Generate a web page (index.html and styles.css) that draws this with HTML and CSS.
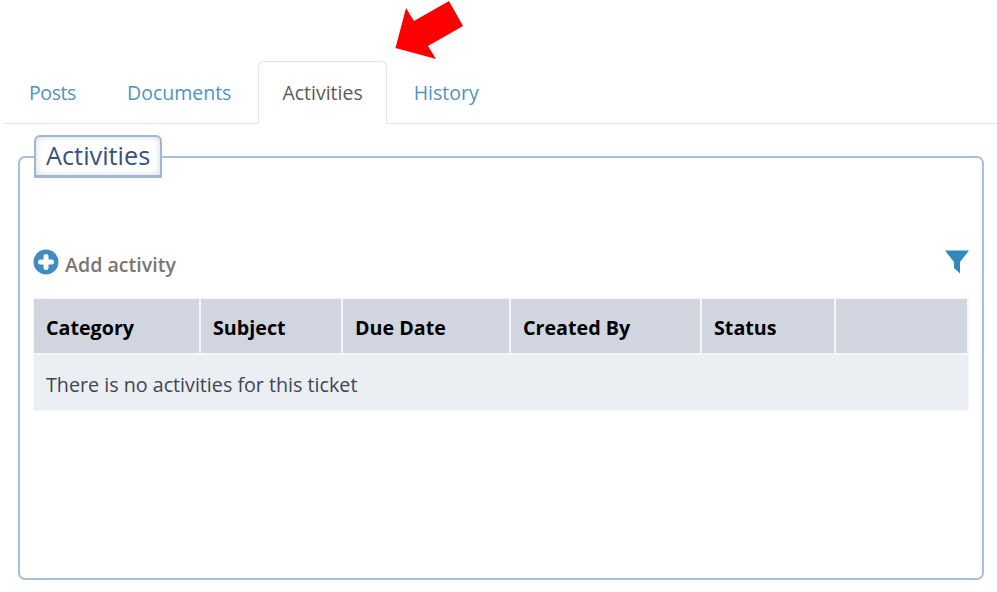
FILE: index.html
```html
<!DOCTYPE html>
<html lang="en">
<head>
<meta charset="utf-8">
<title>Activities</title>
<link rel="stylesheet" href="styles.css">
</head>
<body>
<svg class="arrow" width="80" height="64" viewBox="390 0 80 64"><polygon points="395.5,48 406,8 414,21 449,1 463,26 428,46 436,59" fill="#ff0000"/></svg>
<nav class="tabs">
  <a class="tab tab-tight">Posts</a>
  <a class="tab">Documents</a>
  <a class="tab active">Activities</a>
  <a class="tab">History</a>
</nav>
<fieldset class="panel">
  <legend class="panel-title">Activities</legend>
  <div class="toolbar">
    <a class="add">
      <svg class="add-icon" width="26" height="26" viewBox="0 0 26 26"><circle cx="13" cy="13" r="12.5" fill="#3d8dbf"/><path d="M13 7.500v11M7.500 13h11" stroke="#fff" stroke-width="5" stroke-linecap="round" fill="none"/></svg>
      <span>Add activity</span>
    </a>
    <svg class="filter" width="24" height="24" viewBox="0 0 24 24"><path d="M0 .5H24L15 12V23.500L9 18V12Z" fill="#3388bb"/></svg>
  </div>
  <div class="table">
    <div class="head">Category</div>
    <div class="head">Subject</div>
    <div class="head">Due Date</div>
    <div class="head">Created By</div>
    <div class="head">Status</div>
    <div class="head head-last"></div>
    <div class="empty">There is no activities for this ticket</div>
  </div>
</fieldset>
</body>
</html>
```
FILE: styles.css
```css
* { box-sizing: border-box; }
html, body { margin: 0; padding: 0; background: #fff; }
body {
  position: relative;
  width: 997px;
  height: 592px;
  overflow: hidden;
  font-family: "Open Sans", "Noto Sans", sans-serif;
  color: #3c4043;
  padding-top: 61px;
}
.arrow { position: absolute; left: 390px; top: 0; }
.tabs {
  display: flex;
  gap: 3px;
  height: 63px;
  margin-left: 4px;
  padding-left: 1px;
  border-bottom: 1px solid #e2e4e6;
}
.tab {
  height: 63px;
  padding: 18px 23px 0;
  border: 1px solid transparent;
  border-radius: 6px 6px 0 0;
  font-size: 19.500px;
  line-height: 26px;
  color: #4f93c3;
}
.tab-tight { letter-spacing: -0.4px; }
.tab.active {
  color: #5e5a58;
  background: #fff;
  border-color: #e2e4e6;
  border-bottom-color: #fff;
}
.panel {
  width: 966px;
  height: 445px;
  margin: 11px 0 0 18px;
  padding: 71px 14px 0;
  border: 2px solid #aabfdc;
  border-radius: 7px;
  min-width: 0;
}
.panel-title {
  display: block;
  width: 128px;
  height: 43px;
  padding: 0 0 0 10px;
  border: 2px solid #a5b5cd;
  border-bottom-width: 3px;
  border-radius: 6px 6px 1px 1px;
  background: #fff;
  box-shadow: inset 0 0 7px #cfd7e6;
  font-size: 25.300px;
  line-height: 36px;
  color: #36527e;
}
.toolbar {
  display: flex;
  justify-content: space-between;
  align-items: flex-start;
  height: 50px;
}
.add {
  display: flex;
  align-items: flex-start;
  gap: 6px;
  margin-left: -1px;
  font-size: 19.600px;
  font-weight: 600;
  line-height: 28px;
  color: #7a7672;
}
.add span { padding-top: 2px; }
.add-icon, .filter { display: block; }
.filter { margin-top: 1px; margin-right: -1px; }
.table {
  display: grid;
  grid-template-columns: 167px 142px 168px 191px 134px 1fr;
  grid-template-rows: 56px 55px;
  width: 934px;
  background: #f4f5f7;
  box-shadow: 0 0 0 1px #f4f5f7;
}
.head {
  padding: 15px 12px 0 12px;
  background: #d1d5df;
  background-clip: padding-box;
  border-right: 2px solid #f4f5f7;
  border-bottom: 2px solid #f4f5f7;
  font-size: 19.700px;
  font-weight: 700;
  line-height: 28px;
  color: #000;
}
.head-last { border-right-width: 1px; }
.empty {
  grid-column: 1 / -1;
  padding: 16px 12px 0;
  background: #ebeef3;
  font-size: 19.700px;
  line-height: 28px;
  color: #3f4650;
}
```
